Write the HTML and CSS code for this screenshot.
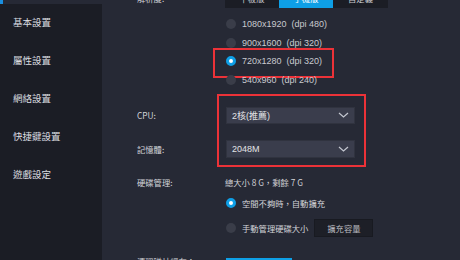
FILE: index.html
```html
<!DOCTYPE html>
<html lang="zh-Hant">
<head>
<meta charset="utf-8">
<link rel="stylesheet" href="styles.css">
</head>
<body>
<div class="app">
  <span class="mark"></span>
  <nav class="side">
    <div class="item">基本設置</div>
    <div class="item">屬性設置</div>
    <div class="item">網絡設置</div>
    <div class="item">快捷鍵設置</div>
    <div class="item">遊戲設定</div>
  </nav>
  <main class="main">
    <div class="content">
      <div class="row res">
        <div class="label tabl">解析度:</div>
        <div class="val">
          <div class="tabs">
            <span class="tab">平板版</span>
            <span class="tab on">手機版</span>
            <span class="tab last">自定義</span>
          </div>
          <ul class="opts">
            <li class="opt"><span class="radio"></span><span class="lat">1080x1920&nbsp;&nbsp;(dpi 480)</span></li>
            <li class="opt"><span class="radio"></span><span class="lat">900x1600&nbsp;&nbsp;(dpi 320)</span></li>
            <li class="opt hl"><span class="radio sel"></span><span class="lat">720x1280&nbsp;&nbsp;(dpi 320)</span></li>
            <li class="opt"><span class="radio"></span><span class="lat">540x960&nbsp;&nbsp;(dpi 240)</span></li>
          </ul>
        </div>
      </div>

      <div class="hlgroup">
        <div class="row cpu">
          <div class="label">CPU:</div>
          <div class="select"><span class="lat">2核(推薦)</span>
            <svg class="chev" width="11" height="6" viewBox="0 0 11 6"><polyline points="1,1 5.5,5 10,1" fill="none" stroke="#c4c7d0" stroke-width="1.2"/></svg>
          </div>
        </div>
        <div class="row mem">
          <div class="label">記憶體:</div>
          <div class="select"><span class="lat">2048M</span>
            <svg class="chev" width="11" height="6" viewBox="0 0 11 6"><polyline points="1,1 5.5,5 10,1" fill="none" stroke="#c4c7d0" stroke-width="1.2"/></svg>
          </div>
        </div>
      </div>

      <div class="row disk">
        <div class="label">硬碟管理:</div>
        <div class="val txt">總大小 8 G，剩餘 7 G</div>
      </div>
      <div class="row r1">
        <div></div>
        <div class="val line"><span class="radio sel"></span>空間不夠時，自動擴充</div>
      </div>
      <div class="row r2">
        <div></div>
        <div class="val line"><span class="radio"></span>手動管理硬碟大小<span class="btn dark">擴充容量</span></div>
      </div>
      <div class="row clean">
        <div class="label">清理磁片緩存：</div>
        <div class="val"><span class="btn blue">立即清理</span></div>
      </div>
    </div>
  </main>
</div>
</body>
</html>
```
FILE: styles.css
```css
* { box-sizing: border-box; }
html, body { margin: 0; padding: 0; }
body {
  width: 460px;
  height: 260px;
  overflow: hidden;
  background: #262935;
  font-family: "Noto Sans CJK TC", "Liberation Sans", sans-serif;
  color: #c9cacf;
}
.app {
  position: relative;
  display: flex;
  width: 460px;
  height: 260px;
  background: #262935;
}
.mark {
  position: absolute;
  left: 0;
  top: 0;
  width: 3px;
  height: 4px;
  background: #1a8fe0;
}
.side {
  width: 102px;
  margin-top: 4px;
  background: #1b1d25;
  display: flex;
  flex-direction: column;
}
.item {
  height: 38px;
  line-height: 38px;
  padding-left: 13px;
  font-size: 9.5px;
  color: #dcdde1;
}
.item:first-child { margin-top: -1px; }
.main {
  flex: 1;
  overflow: hidden;
}
.content {
  margin-top: -12px;
  padding-left: 35px;
  display: flex;
  flex-direction: column;
}
.row {
  display: grid;
  grid-template-columns: 88px 1fr;
  align-items: center;
}
.label {
  font-size: 8.3px;
  color: #d2d3d8;
  white-space: nowrap;
}
.res { align-items: start; }
.tabl { line-height: 20px; }
.lat {
  font-family: "Liberation Sans", "Noto Sans CJK TC", sans-serif;
  font-size: 9px;
}
.tabs { display: flex; height: 20px; }
.tab {
  width: 54px;
  height: 20px;
  line-height: 20px;
  text-align: center;
  font-size: 8.3px;
  background: #1b1d25;
  color: #c9cacf;
}
.tab.on { background: #0e9fe6; color: #ffffff; }
.tab.last { width: 55px; }
.opts {
  list-style: none;
  margin: 6.5px 0 0 0;
  padding: 0;
}
.opt {
  position: relative;
  height: 18.7px;
  display: flex;
  align-items: center;
  padding-left: 1px;
  color: #c8c9cf;
}
.radio {
  width: 10px;
  height: 10px;
  border-radius: 50%;
  background: #3a3d49;
  margin-right: 6px;
  flex: none;
}
.radio.sel {
  background: #ffffff;
  border: 3px solid #0e9fe6;
}
.opt.hl::after {
  content: "";
  position: absolute;
  left: -12px;
  top: -4px;
  width: 117px;
  height: 26px;
  border: 2px solid #ec3238;
}
.hlgroup {
  position: relative;
  margin-top: 17.7px;
}
.hlgroup::after {
  content: "";
  position: absolute;
  left: 80px;
  top: -13px;
  width: 145px;
  height: 69px;
  border: 2px solid #ec3238;
}
.select {
  margin-left: 1px;
  width: 129px;
  height: 17px;
  background: #3a3d4c;
  border: 1px solid #30333f;
  display: flex;
  align-items: center;
  justify-content: space-between;
  padding: 0 5px 0 5px;
  color: #e2e3e6;
}
.mem { margin-top: 16px; }
.mem .select { height: 18px; }
.disk { margin-top: 17px; height: 14px; }
.txt { font-size: 8.3px; color: #d2d3d8; }
.line {
  display: flex;
  align-items: center;
  font-size: 8.3px;
  color: #d2d3d8;
  padding-left: 1px;
}
.r1 { margin-top: 4px; height: 20px; }
.r2 { margin-top: 6px; height: 18px; }
.btn {
  display: inline-flex;
  align-items: center;
  justify-content: center;
  height: 18px;
  font-size: 8.3px;
}
.btn.dark {
  margin-left: 6px;
  width: 59px;
  background: #1d1f27;
  border: 1px solid #181a21;
  color: #b8b9bf;
}
.btn.blue {
  margin-left: 1px;
  width: 66px;
  background: #0e9fe6;
  color: #ffffff;
}
.clean { margin-top: 15px; align-items: start; }
.clean .label { line-height: 18px; }
```
